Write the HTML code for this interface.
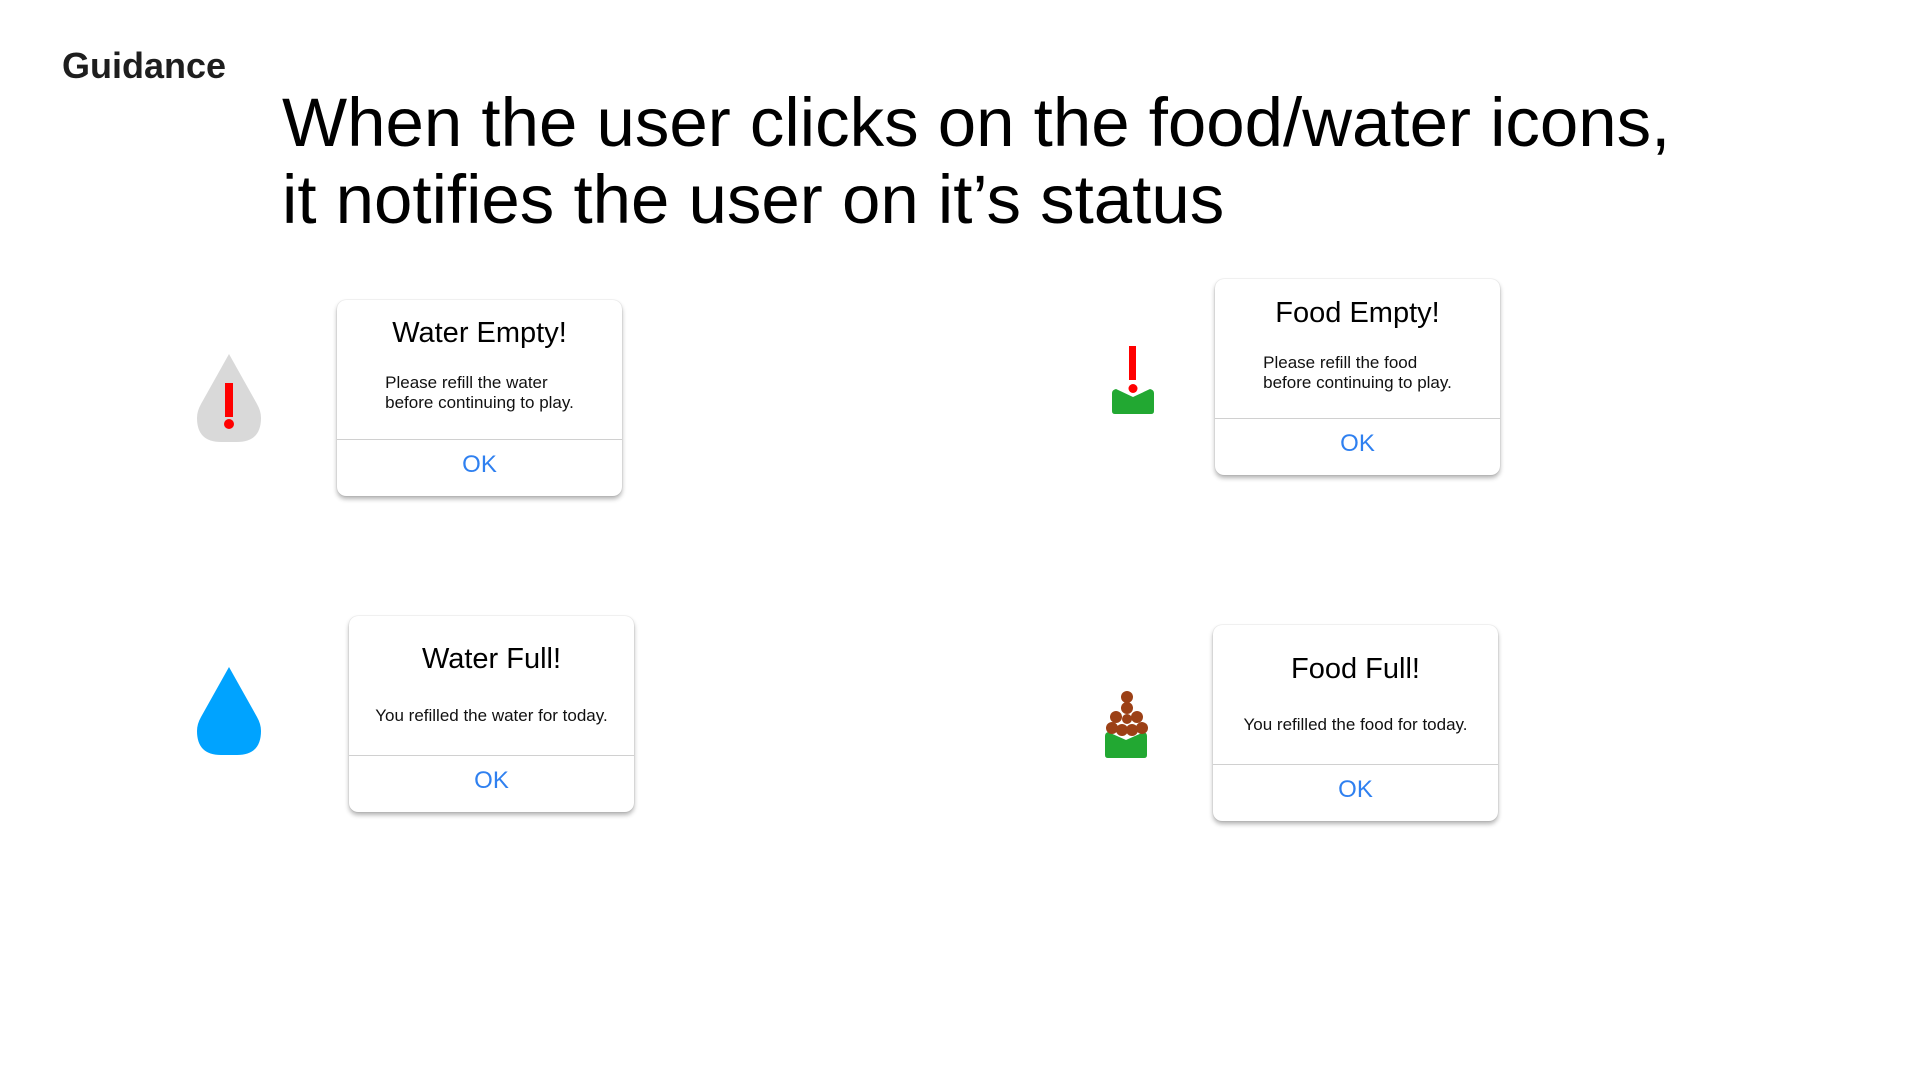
<!DOCTYPE html>
<html><head><meta charset="utf-8"><style>
body{margin:0;width:1921px;height:1080px;background:#fff;position:relative;overflow:hidden;font-family:"Liberation Sans",sans-serif;color:#000}
.abs{position:absolute}
.g{left:62px;top:44px;font-size:36px;font-weight:bold;color:#1e1e1e;line-height:44px}
.t{left:282px;top:84px;font-size:69px;line-height:77px;white-space:nowrap}
.card{position:absolute;width:285px;height:196px;background:#fff;border-radius:9px;box-shadow:0 3px 5px rgba(0,0,0,.3),0 0 1px rgba(0,0,0,.25)}
.card .ti{position:absolute;left:0;right:0;text-align:center;font-size:29px;line-height:34px}
.card .bd{position:absolute;left:0;right:0;display:flex;justify-content:center;font-size:17px;line-height:20px;color:#111}
.card .dv{position:absolute;left:0;right:0;top:139px;height:1px;background:#d0d0d0}
.card .ok{position:absolute;left:0;right:0;top:150px;text-align:center;font-size:24px;line-height:30px;color:#2f80f0}
</style></head><body>
<div class="abs g">Guidance</div>
<div class="abs t">When the user clicks on the food/water icons,<br>it notifies the user on it’s status</div>

<!-- Water empty -->
<svg class="abs" style="left:197px;top:354px" width="64" height="88" viewBox="0 0 64 88"><path d="M32 0 L60 50 Q64 57 64 64 Q64 88 40 88 L24 88 Q0 88 0 64 Q0 57 4 50 Z" fill="#d9d9d9"/><rect x="28" y="29" width="8" height="34" fill="#f00"/><circle cx="32" cy="70" r="5" fill="#f00"/></svg>
<div class="card" style="left:337px;top:300px">
<div class="ti" style="top:16px">Water Empty!</div>
<div class="bd" style="top:73px"><div>Please refill the water<br>before continuing to play.</div></div>
<div class="dv"></div><div class="ok">OK</div></div>

<!-- Water full -->
<svg class="abs" style="left:197px;top:667px" width="64" height="88" viewBox="0 0 64 88"><path d="M32 0 L60 50 Q64 57 64 64 Q64 88 40 88 L24 88 Q0 88 0 64 Q0 57 4 50 Z" fill="#00a3ff"/></svg>
<div class="card" style="left:349px;top:616px">
<div class="ti" style="top:26px">Water Full!</div>
<div class="bd" style="top:90px"><div>You refilled the water for today.</div></div>
<div class="dv"></div><div class="ok">OK</div></div>

<!-- Food empty -->
<svg class="abs" style="left:1100px;top:340px" width="70" height="80" viewBox="1100 340 70 80"><rect x="1129" y="346" width="7" height="34" fill="#f00"/><path d="M1112 393 Q1112 390 1116 389 L1133 397 L1150 389 Q1154 390 1154 393 L1154 411 Q1154 414 1151 414 L1115 414 Q1112 414 1112 411 Z" fill="#22a832"/><circle cx="1133" cy="388.5" r="4.5" fill="#f00"/></svg>
<div class="card" style="left:1215px;top:279px">
<div class="ti" style="top:17px">Food Empty!</div>
<div class="bd" style="top:74px"><div>Please refill the food<br>before continuing to play.</div></div>
<div class="dv"></div><div class="ok">OK</div></div>

<!-- Food full -->
<svg class="abs" style="left:1100px;top:680px" width="60" height="90" viewBox="1100 680 60 90"><path d="M1105 736 Q1105 733 1108 732 L1126 740 L1144 732 Q1147 733 1147 736 L1147 755 Q1147 758 1144 758 L1108 758 Q1105 758 1105 755 Z" fill="#22a832"/>
<g fill="#9c4016"><circle cx="1127" cy="697" r="6"/><circle cx="1127" cy="708" r="6"/><circle cx="1116" cy="717" r="6"/><circle cx="1137" cy="717" r="6"/><circle cx="1127" cy="719" r="5"/><circle cx="1112" cy="728" r="6"/><circle cx="1142" cy="728" r="6"/><circle cx="1122" cy="730" r="6"/><circle cx="1132" cy="730" r="6"/></g></svg>
<div class="card" style="left:1213px;top:625px">
<div class="ti" style="top:27px">Food Full!</div>
<div class="bd" style="top:90px"><div>You refilled the food for today.</div></div>
<div class="dv"></div><div class="ok">OK</div></div>
</body></html>
